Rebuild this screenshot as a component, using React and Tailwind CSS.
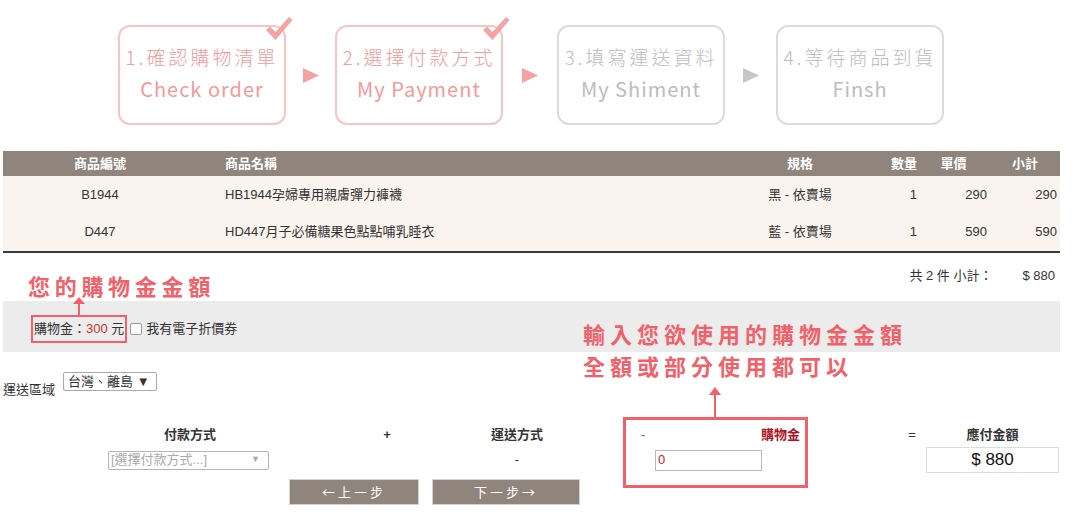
const FONT = { fontFamily: '"Liberation Sans", "Noto Sans CJK TC", sans-serif' };
const CJK = { fontFamily: '"Noto Sans CJK TC", "Liberation Sans", sans-serif' };

const steps = [
  { zh: "1.確認購物清單", en: "Check order", done: true },
  { zh: "2.選擇付款方式", en: "My Payment", done: true },
  { zh: "3.填寫運送資料", en: "My Shiment", done: false },
  { zh: "4.等待商品到貨", en: "Finsh", done: false },
];

const items = [
  { code: "B1944", name: "HB1944孕婦專用親膚彈力褲襪", spec: "黑 - 依賣場", qty: 1, price: 290, total: 290 },
  { code: "D447", name: "HD447月子必備糖果色點點哺乳睡衣", spec: "藍 - 依賣場", qty: 1, price: 590, total: 590 },
];

const CheckMark = () => (
  <svg className="absolute -right-[9px] -top-[11px]" width="28" height="26" viewBox="0 0 28 26">
    <path d="M1 14 L5 10.5 L10.5 16 L24 1 L27.5 4 L10.5 24 Z" fill="#f5a3a3" />
  </svg>
);

const StepArrow = ({ done, w }) => (
  <div className={`flex justify-center items-center ${w}`}>
    <svg width="16" height="15" viewBox="0 0 16 15">
      <polygon points="0,0 16,7.5 0,15" fill={done ? "#f4a3a3" : "#cac6c6"} />
    </svg>
  </div>
);

const StepBox = ({ step }) => (
  <div
    className={`relative w-[168px] h-[100px] rounded-[12px] border-2 flex flex-col items-center pt-[14px] ${
      step.done ? "border-[#f8c5c5] text-[#f39a9a]" : "border-[#dcdcdc] text-[#bcbcbc]"
    }`}
    style={CJK}
  >
    <div className="text-[19px] leading-[32px] tracking-[3px] font-light">{step.zh}</div>
    <div className="text-[20px] leading-[32px] tracking-[1px] font-normal">{step.en}</div>
    {step.done && <CheckMark />}
  </div>
);

export default function App() {
  return (
    <div className="relative w-[1087px] h-[518px] bg-white overflow-hidden text-[#333]" style={FONT}>
      {/* steps */}
      <div className="flex items-center pl-[118px] pt-[25px]">
        <StepBox step={steps[0]} />
        <StepArrow done w="w-[49px]" />
        <StepBox step={steps[1]} />
        <StepArrow done w="w-[54px]" />
        <StepBox step={steps[2]} />
        <StepArrow w="w-[51px]" />
        <StepBox step={steps[3]} />
      </div>

      {/* cart table */}
      <div className="ml-[3px] w-[1057px] mt-[26px] text-[13px]">
        <div className="grid grid-cols-[194px_528px_150px_42px_73px_70px] h-[25px] items-center bg-[#8f857c] text-white font-bold">
          <div className="text-center">商品編號</div>
          <div className="pl-[28px]">商品名稱</div>
          <div className="text-center">規格</div>
          <div className="text-right">數量</div>
          <div className="text-center">單價</div>
          <div className="text-center">小計</div>
        </div>
        <div className="bg-[#faf3ee] border-b-2 border-[#3a3a3a]">
          {items.map((it, i) => (
            <div
              key={it.code}
              className={`grid grid-cols-[194px_528px_150px_42px_73px_70px] items-center ${i === 0 ? "h-[37px]" : "h-[38px]"}`}
            >
              <div className="text-center">{it.code}</div>
              <div className="pl-[28px]">{it.name}</div>
              <div className="text-center">{it.spec}</div>
              <div className="text-right">{it.qty}</div>
              <div className="text-right pr-[3px]">{it.price}</div>
              <div className="text-right pr-[3px]">{it.total}</div>
            </div>
          ))}
        </div>

        <div className="flex justify-between h-[48px]">
          <div className="pl-[25px] pt-[17px] text-[22px] leading-[30px] font-bold tracking-[4.7px] text-[#f2616a]" style={CJK}>
            您的購物金金額
          </div>
          <div className="flex pt-[14px] leading-[18px] pr-[5px]">
            <span>共 2 件 小計：</span>
            <span className="ml-[30px]">$ 880</span>
          </div>
        </div>

        {/* credit band */}
        <div className="h-[51px] bg-[#ececec] pt-[14px] pl-[28px] flex items-start">
          <span className="border-2 border-[#f2616a] px-[1px] h-[28px] flex items-center">
            購物金：<span className="text-[#c0392b]">300</span>&nbsp;元
          </span>
          <span className="flex items-center h-[28px] ml-[3px]">
            <span className="w-[12px] h-[12px] border border-[#999] rounded-[2px] bg-white mr-[4px]" />
            我有電子折價券
          </span>
        </div>
      </div>

      {/* shipping region */}
      <div className="flex items-start ml-[3px] mt-[20px] text-[13px]">
        <span className="mt-[10px] leading-[16px]">運送區域</span>
        <div className="ml-[8px] w-[94px] h-[19px] border border-[#a9a9a9] rounded-[2px] flex items-center pl-[4px] leading-none">
          台灣、離島 ▼
        </div>
      </div>

      {/* totals */}
      <div className="mt-[29px] text-[13px]">
        <div className="flex h-[16px] items-center font-bold">
          <div className="ml-[100px] w-[180px] text-center">付款方式</div>
          <div className="ml-[77px] w-[60px] text-center">+</div>
          <div className="ml-[50px] w-[100px] text-center">運送方式</div>
          <div className="ml-[68px] w-[165px] flex justify-between pl-[6px]">
            <span className="text-[#c0392b] font-normal">-</span>
            <span className="text-[#b0101e]">購物金</span>
          </div>
          <div className="ml-[102px] w-[20px] text-center font-normal">=</div>
          <div className="ml-[4px] w-[133px] text-center">應付金額</div>
        </div>
        <div className="flex h-[26px] items-center mt-[4px]">
          <div className="ml-[108px] w-[161px] h-[19px] border border-[#b5b5b5] rounded-[2px] flex items-center justify-between px-[2px] text-[#aaa]">
            <span>[選擇付款方式...]</span>
            <span className="text-[9px] pr-[6px]">▼</span>
          </div>
          <div className="ml-[198px] w-[100px] text-center">-</div>
          <div className="ml-[88px] w-[107px] h-[21px] border border-[#b8b8b8] flex items-center pl-[2px] text-[#d0202e]">
            0
          </div>
          <div className="ml-[164px] w-[133px] h-[26px] border border-[#dcdcdc] flex items-center justify-center text-[17px] text-[#111]">
            $ 880
          </div>
        </div>
        <div className="flex mt-[6px]">
          <button className="ml-[289px] w-[130px] h-[26px] bg-[#8f857c] border border-[#d5d1cd] text-white tracking-[3px]" style={CJK}>
            ←上一步
          </button>
          <button className="ml-[13px] w-[148px] h-[26px] bg-[#8f857c] border border-[#d5d1cd] text-white tracking-[3px]" style={CJK}>
            下一步→
          </button>
        </div>
      </div>

      {/* annotations */}
      <svg className="absolute left-[73px] top-[297px]" width="12" height="19" viewBox="0 0 12 19">
        <polygon points="6,0 12,7 0,7" fill="#f2616a" />
        <rect x="5" y="6" width="2" height="13" fill="#f2616a" />
      </svg>
      <div
        className="absolute left-[583px] top-[317px] text-[22px] leading-[32px] font-bold tracking-[5px] text-[#f2616a]"
        style={CJK}
      >
        <div>輸入您欲使用的購物金金額</div>
        <div>全額或部分使用都可以</div>
      </div>
      <svg className="absolute left-[709px] top-[387px]" width="12" height="31" viewBox="0 0 12 31">
        <polygon points="6,0 12,8 0,8" fill="#f2616a" />
        <rect x="5" y="7" width="2" height="24" fill="#f2616a" />
      </svg>
      <div className="absolute left-[623px] top-[417px] w-[185px] h-[71px] border-[3px] border-[#f2616a]" />
    </div>
  );
}
